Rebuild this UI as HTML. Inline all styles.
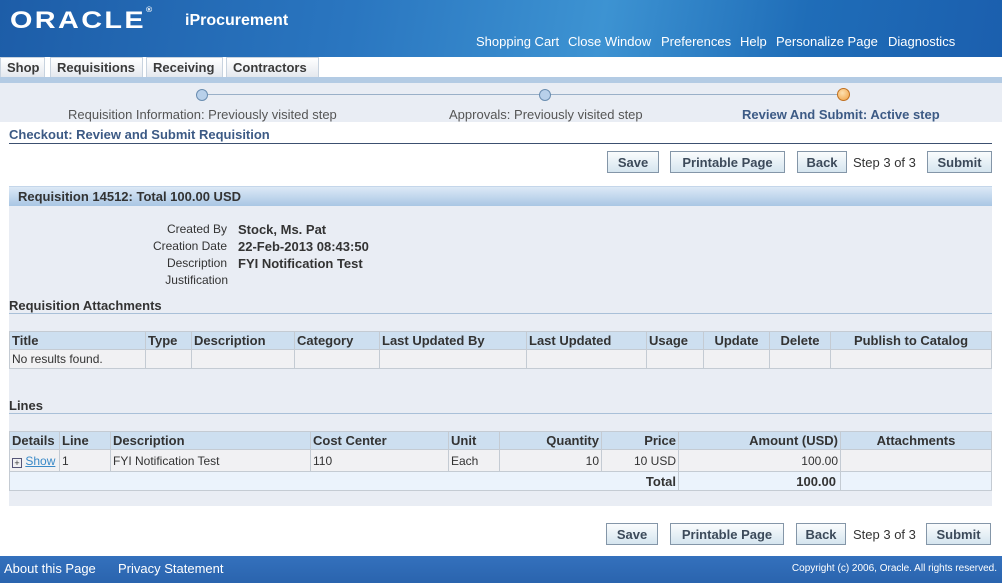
<!DOCTYPE html>
<html><head><meta charset="utf-8"><style>
*{margin:0;padding:0;box-sizing:border-box}
body{width:1002px;height:583px;position:relative;overflow:hidden;background:#fff;font-family:"Liberation Sans",Arial,sans-serif;font-size:12px;color:#333}
.a{position:absolute;white-space:nowrap}
.hdr{left:0;top:0;width:1002px;height:57px;background:linear-gradient(100deg,#1d5da8 0%,#2a76c0 35%,#3d93d2 60%,#1f6db8 80%,#1b5fae 100%)}
.lnk{color:#fff;font-size:13px;top:34px}
.tab{top:57px;height:20px;background:linear-gradient(#fff,#e4e8ee);border:1px solid #c8d3df;border-bottom:none;font-weight:bold;font-size:13px;color:#3a3a3a;padding:2px 0 0 6px}
.btn{height:22px;border:1px solid #8496a8;background:linear-gradient(#fafcfd,#d5e5ef);font-weight:bold;font-size:13px;color:#3c4a5a;text-align:center;padding-top:3px}
.lbl{font-size:12px;color:#333}
table{position:absolute;border-collapse:collapse;font-size:12px}
td,th{border:1px solid #c4cbd3;padding:0 2px;text-align:left;white-space:nowrap}
th{background:#cddff0;font-weight:bold;font-size:13px;color:#333;height:18px}
td{background:#f1f1f3;color:#333;height:19px}
</style></head><body>
<div class="a hdr"></div>
<div class="a" style="left:10px;top:7px;font-size:24px;font-weight:bold;color:#fff;letter-spacing:2px;transform:scaleX(1.2);transform-origin:left">ORACLE<span style="font-size:7px;vertical-align:top">®</span></div>
<div class="a" style="left:185px;top:12px;font-size:16px;font-weight:bold;color:#fff">iProcurement</div>
<div class="a lnk" style="left:476px">Shopping Cart</div>
<div class="a lnk" style="left:568px">Close Window</div>
<div class="a lnk" style="left:661px">Preferences</div>
<div class="a lnk" style="left:740px">Help</div>
<div class="a lnk" style="left:776px">Personalize Page</div>
<div class="a lnk" style="left:888px">Diagnostics</div>
<div class="a tab" style="left:0;width:45px">Shop</div>
<div class="a tab" style="left:50px;width:93px">Requisitions</div>
<div class="a tab" style="left:146px;width:77px">Receiving</div>
<div class="a tab" style="left:226px;width:93px">Contractors</div>
<div class="a" style="left:0;top:77px;width:1002px;height:6px;background:#b3cbe4"></div>
<div class="a" style="left:0;top:83px;width:1002px;height:39px;background:#e9edf4"></div>
<div class="a" style="left:202px;top:94px;width:641px;height:1px;background:#9ab0c8"></div>
<div class="a" style="left:196px;top:89px;width:12px;height:12px;border-radius:50%;background:#b8d0ea;border:1px solid #6a8db0"></div>
<div class="a" style="left:539px;top:89px;width:12px;height:12px;border-radius:50%;background:#b8d0ea;border:1px solid #6a8db0"></div>
<div class="a" style="left:837px;top:88px;width:13px;height:13px;border-radius:50%;background:radial-gradient(circle at 40% 35%,#fde0b0,#f0a040);border:1px solid #c07020"></div>
<div class="a" style="left:68px;top:107px;font-size:13px;color:#555">Requisition Information: Previously visited step</div>
<div class="a" style="left:449px;top:107px;font-size:13px;color:#555">Approvals: Previously visited step</div>
<div class="a" style="left:742px;top:107px;font-size:13px;font-weight:bold;color:#3c5a85">Review And Submit: Active step</div>
<div class="a" style="left:9px;top:127px;font-size:13px;font-weight:bold;color:#3c5a85">Checkout: Review and Submit Requisition</div>
<div class="a" style="left:9px;top:143px;width:983px;height:1px;background:#3c5070"></div>
<div class="a btn" style="left:607px;top:151px;width:52px">Save</div>
<div class="a btn" style="left:670px;top:151px;width:115px">Printable Page</div>
<div class="a btn" style="left:797px;top:151px;width:50px">Back</div>
<div class="a" style="left:853px;top:155px;font-size:13px">Step 3 of 3</div>
<div class="a btn" style="left:927px;top:151px;width:65px">Submit</div>
<div class="a" style="left:9px;top:186px;width:983px;height:320px;background:#e9edf4"></div>
<div class="a" style="left:9px;top:186px;width:983px;height:20px;background:linear-gradient(#dce9f6,#a9c6e4);border-top:1px solid #c4d6ea"></div>
<div class="a" style="left:18px;top:189px;font-size:13px;font-weight:bold;color:#333">Requisition 14512: Total 100.00 USD</div>
<div class="a lbl" style="right:775px;top:222px">Created By</div>
<div class="a lbl" style="right:775px;top:239px">Creation Date</div>
<div class="a lbl" style="right:775px;top:256px">Description</div>
<div class="a lbl" style="right:774px;top:273px">Justification</div>
<div class="a" style="left:238px;top:222px;font-weight:bold;font-size:13px">Stock, Ms. Pat</div>
<div class="a" style="left:238px;top:239px;font-weight:bold;font-size:13px">22-Feb-2013 08:43:50</div>
<div class="a" style="left:238px;top:256px;font-weight:bold;font-size:13px">FYI Notification Test</div>
<div class="a" style="left:9px;top:298px;font-weight:bold;font-size:13px">Requisition Attachments</div>
<div class="a" style="left:9px;top:313px;width:983px;height:1px;background:#a9c0d8"></div>
<table style="left:9px;top:331px;width:983px">
<tr><th style="width:136px">Title</th><th style="width:46px">Type</th><th style="width:103px">Description</th><th style="width:85px">Category</th><th style="width:147px">Last Updated By</th><th style="width:120px">Last Updated</th><th style="width:57px">Usage</th><th style="width:66px;text-align:center">Update</th><th style="width:61px;text-align:center">Delete</th><th style="text-align:center">Publish to Catalog</th></tr>
<tr><td>No results found.</td><td></td><td></td><td></td><td></td><td></td><td></td><td></td><td></td><td></td></tr>
</table>
<div class="a" style="left:9px;top:398px;font-weight:bold;font-size:13px">Lines</div>
<div class="a" style="left:9px;top:413px;width:983px;height:1px;background:#a9c0d8"></div>
<table style="left:9px;top:431px;width:983px">
<tr><th style="width:50px">Details</th><th style="width:51px">Line</th><th style="width:200px">Description</th><th style="width:138px">Cost Center</th><th style="width:51px">Unit</th><th style="width:102px;text-align:right">Quantity</th><th style="width:77px;text-align:right">Price</th><th style="width:162px;text-align:right">Amount (USD)</th><th style="text-align:center">Attachments</th></tr>
<tr><td style="height:22px"><span style="display:inline-block;width:10px;height:10px;border:1px solid #557;font-size:9px;line-height:8px;text-align:center;vertical-align:-1px">+</span> <span style="color:#3a8ac8;text-decoration:underline">Show</span></td><td>1</td><td>FYI Notification Test</td><td>110</td><td>Each</td><td style="text-align:right">10</td><td style="text-align:right">10 USD</td><td style="text-align:right">100.00</td><td></td></tr>
<tr><td colspan="7" style="background:#ebf3fc;text-align:right;font-weight:bold;font-size:13px;border-right:1px solid #c4cbd3">Total</td><td style="background:#ebf3fc;text-align:right;font-weight:bold;font-size:13px;padding-right:4px">100.00</td><td style="background:#ebf3fc"></td></tr>
</table>
<div class="a btn" style="left:606px;top:523px;width:52px">Save</div>
<div class="a btn" style="left:670px;top:523px;width:114px">Printable Page</div>
<div class="a btn" style="left:796px;top:523px;width:50px">Back</div>
<div class="a" style="left:853px;top:527px;font-size:13px">Step 3 of 3</div>
<div class="a btn" style="left:926px;top:523px;width:65px">Submit</div>
<div class="a" style="left:0;top:556px;width:1002px;height:27px;background:linear-gradient(#3471bd,#2a64ae)"></div>
<div class="a" style="left:4px;top:561px;font-size:13px;color:#fff">About this Page</div>
<div class="a" style="left:118px;top:561px;font-size:13px;color:#fff">Privacy Statement</div>
<div class="a" style="right:5px;top:563px;font-size:10px;color:#fff">Copyright (c) 2006, Oracle. All rights reserved.</div>
</body></html>
